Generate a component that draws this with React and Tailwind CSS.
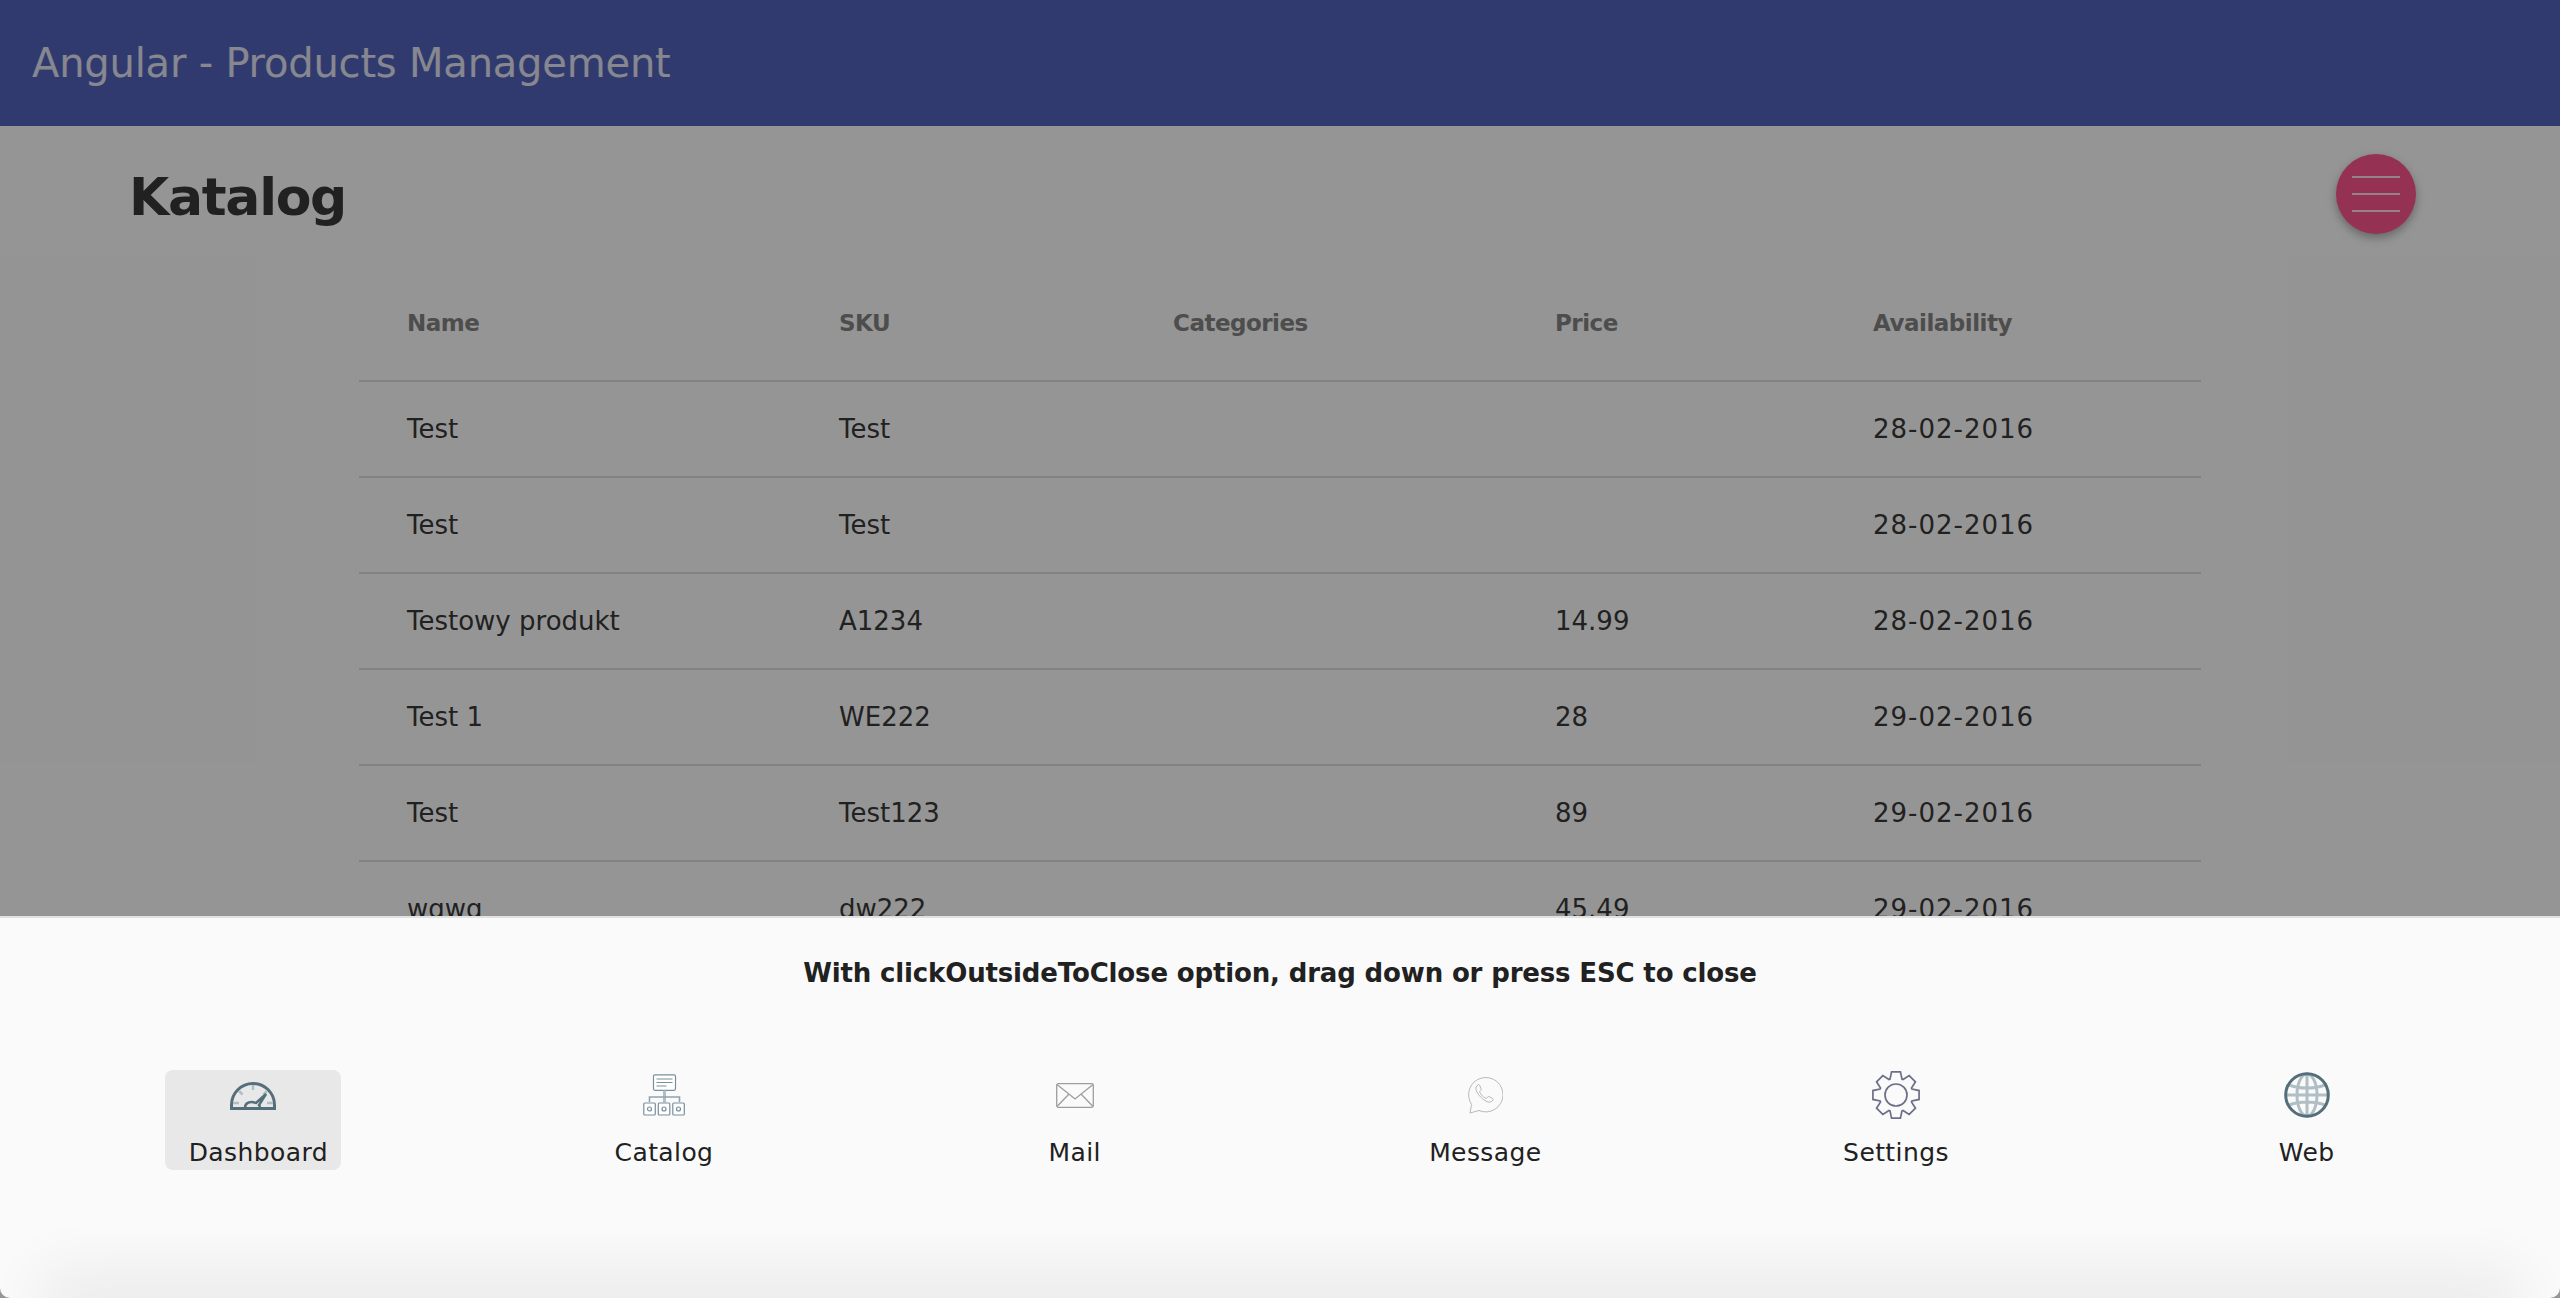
const COLUMNS = [
  { label: "Name", width: "w-[480px]" },
  { label: "SKU", width: "w-[334px]" },
  { label: "Categories", width: "w-[382px]" },
  { label: "Price", width: "w-[318px]" },
  { label: "Availability", width: "w-[328px]" },
];

const PRODUCTS = [
  ["Test", "Test", "", "", "28-02-2016"],
  ["Test", "Test", "", "", "28-02-2016"],
  ["Testowy produkt", "A1234", "", "14.99", "28-02-2016"],
  ["Test 1", "WE222", "", "28", "29-02-2016"],
  ["Test", "Test123", "", "89", "29-02-2016"],
  ["wqwq", "dw222", "", "45.49", "29-02-2016"],
  ["Test", "Test", "", "", "29-02-2016"],
];

function DashboardIcon() {
  return (
    <svg width="46" height="30" viewBox="0 0 46 30" fill="none">
      <path d="M1.5 28.5V25a21.5 21.5 0 0 1 43 0v3.5Z" stroke="#546e7a" strokeWidth="3" />
      <g stroke="#b0bec5" strokeWidth="2.5">
        <path d="M23 5v5M9 11l3.5 3.5M37 11l-3.5 3.5M3 23h6M37 23h6" />
      </g>
      <path d="M15 28c0-4 3-6 7-6 2 0 3 1 4 1l10-9-7 11c1 1 1 2 1 3" stroke="#546e7a" strokeWidth="2.5" />
    </svg>
  );
}

function CatalogIcon() {
  return (
    <svg width="42" height="42" viewBox="0 0 42 42" fill="none" stroke="#78909c" strokeWidth="1.2">
      <rect x="10.5" y="0.8" width="22" height="15.5" rx="1.5" fill="#fff" />
      <path d="M13.5 5h16M13.5 8.500h16M13.5 12h10" />
      <path d="M21.5 16.5v12" stroke="#b0bec5" strokeWidth="3" />
      <path d="M6.5 28v-5h30v5" stroke="#90a4ae" strokeWidth="1.6" />
      {[0.8, 15.3, 29.8].map((x) => (
        <g key={x}>
          <rect x={x} y="29" width="11.5" height="12" rx="1" fill="#fff" />
          <circle cx={x + 5.7} cy="35" r="2" />
        </g>
      ))}
    </svg>
  );
}

function MailIcon() {
  return (
    <svg width="38" height="25" viewBox="0 0 38 25" fill="none" stroke="#9e9e9e" strokeWidth="1.3">
      <rect x="0.7" y="0.7" width="36.6" height="23.6" rx="1.5" />
      <path d="M1 1.5 19 16 37 1.5M1 23.5l12-12.500M37 23.5 25 11" />
    </svg>
  );
}

function MessageIcon() {
  return (
    <svg width="36" height="38" viewBox="0 0 36 38" fill="none" stroke="#a8a8a8" strokeWidth="0.8">
      <path d="M3 37l1.6-8.600A17.200 17.200 0 1 1 12 34.500Z" />
      <path d="M11 9c-1.500 1-2.500 2.500-2 4.500 1 4.500 7 11 12 12.500 2 .6 4-.5 5-2 .4-.7 0-1.300-.5-1.600l-3.500-1.800c-.6-.3-1.100-.1-1.500.4l-1.200 1.500c-2.800-1-5.600-3.800-6.800-6.800l1.300-1.300c.4-.4.5-1 .3-1.500l-1.500-3.600c-.3-.7-1-.9-1.600-.6Z" />
    </svg>
  );
}

// 8 tooth cog outline, top tooth at 12 o'clock
function gearPath() {
  const points = [];
  for (let i = 0; i < 8; i++) {
    const a = (i * Math.PI) / 4 - Math.PI / 2;
    [[-0.36, 17], [-0.19, 23.5], [0.19, 23.5], [0.36, 17]].forEach(([da, r]) => {
      points.push(`${(24 + r * Math.cos(a + da)).toFixed(2)} ${(24 + r * Math.sin(a + da)).toFixed(2)}`);
    });
  }
  return `M${points.join("L")}Z`;
}

function SettingsIcon() {
  return (
    <svg width="48" height="48" viewBox="0 0 48 48" fill="none" stroke="#6b7088" strokeWidth="1.7">
      <path d={gearPath()} />
      <circle cx="24" cy="24" r="11" />
    </svg>
  );
}

function WebIcon() {
  return (
    <svg width="46" height="46" viewBox="0 0 46 46" fill="none">
      <g stroke="#b0bec5" strokeWidth="3">
        <ellipse cx="23" cy="23" rx="10" ry="21" />
        <path d="M23 2v42M2 23h42M5 13c10 4 26 4 36 0M5 33c10-4 26-4 36 0" />
      </g>
      <circle cx="23" cy="23" r="21.300" stroke="#546e7a" strokeWidth="3" />
    </svg>
  );
}

const SHEET_ITEMS = [
  { label: "Dashboard", Icon: DashboardIcon, active: true },
  { label: "Catalog", Icon: CatalogIcon },
  { label: "Mail", Icon: MailIcon },
  { label: "Message", Icon: MessageIcon },
  { label: "Settings", Icon: SettingsIcon },
  { label: "Web", Icon: WebIcon },
];

function SheetItem({ label, Icon, active }) {
  return (
    <div className={`w-[176px] h-[100px] flex flex-col items-center rounded-lg ${active ? "bg-[#e8e8e8]" : ""}`}>
      <div className="h-[50px] flex items-center justify-center">
        <Icon />
      </div>
      <div className={`mt-[18px] text-[25px] leading-[30px] tracking-[0.4px] text-[#212121] whitespace-nowrap ${active ? "pl-[10px]" : ""}`}>
        {label}
      </div>
    </div>
  );
}

export default function App() {
  return (
    <div className="relative h-screen w-full overflow-hidden bg-white font-['DejaVu_Sans',sans-serif]">
      <header className="h-[126px] bg-[#3f51b5] flex items-center px-[32px]">
        <span className="text-[40px] text-white/85 tracking-[-0.2px]">Angular - Products Management</span>
      </header>

      <main>
        <h1 className="h-[139px] pt-[3px] flex items-center pl-[129px] text-[52px] tracking-[-1.3px] font-bold text-[#212121]">Katalog</h1>
        <table className="mx-auto w-[1842px] table-fixed border-collapse text-left">
          <colgroup>
            {COLUMNS.map((c) => (
              <col key={c.label} className={c.width} />
            ))}
          </colgroup>
          <thead>
            <tr className="h-[116px] border-b-2 border-[#dcdcdc]">
              {COLUMNS.map((c, i) => (
                <th key={c.label} className={`pt-[2px] text-[23px] tracking-[-0.5px] font-bold text-[#757575] ${i === 0 ? "pl-[48px]" : ""}`}>
                  {c.label}
                </th>
              ))}
            </tr>
          </thead>
          <tbody>
            {PRODUCTS.map((row, r) => (
              <tr key={r} className="h-[96px] border-b-2 border-[#dcdcdc]">
                {row.map((cell, i) => (
                  <td key={i} className={`text-[26px] text-[#212121] ${i === 0 ? "pl-[48px]" : ""} ${i === 4 ? "tracking-[1px]" : ""}`}>
                    {cell}
                  </td>
                ))}
              </tr>
            ))}
          </tbody>
        </table>
      </main>

      {/* menu button */}
      <button className="absolute left-[2336px] top-[154px] w-[80px] h-[80px] rounded-full bg-[#ff4081] shadow-[0_4px_10px_rgba(0,0,0,0.35)] flex flex-col items-center justify-center gap-[15px]">
        <span className="w-[48px] h-[2px] bg-white/80" />
        <span className="w-[48px] h-[2px] bg-white/80" />
        <span className="w-[48px] h-[2px] bg-white/80" />
      </button>

      {/* backdrop */}
      <div className="absolute inset-0 bg-[#212121]/48" />

      {/* bottom sheet */}
      <section className="absolute inset-x-0 bottom-0 h-[382px] overflow-hidden bg-[#fafafa] border-t-2 border-[#e2e2e2] rounded-b-[10px]">
        <p className="mt-[37px] text-center text-[26px] leading-[36px] tracking-[-0.15px] font-bold text-[#212121]">
          With clickOutsideToClose option, drag down or press ESC to close
        </p>
        <div className="mt-[79px] px-[48px] grid grid-cols-6 justify-items-center">
          {SHEET_ITEMS.map((item) => (
            <SheetItem key={item.label} {...item} />
          ))}
        </div>
        {/* soft shade along the bottom edge, fades out at the corners */}
        <div className="absolute left-[70px] right-[70px] -bottom-[20px] h-[20px] shadow-[0_0_60px_30px_rgba(0,0,0,0.06)]" />
      </section>
    </div>
  );
}
